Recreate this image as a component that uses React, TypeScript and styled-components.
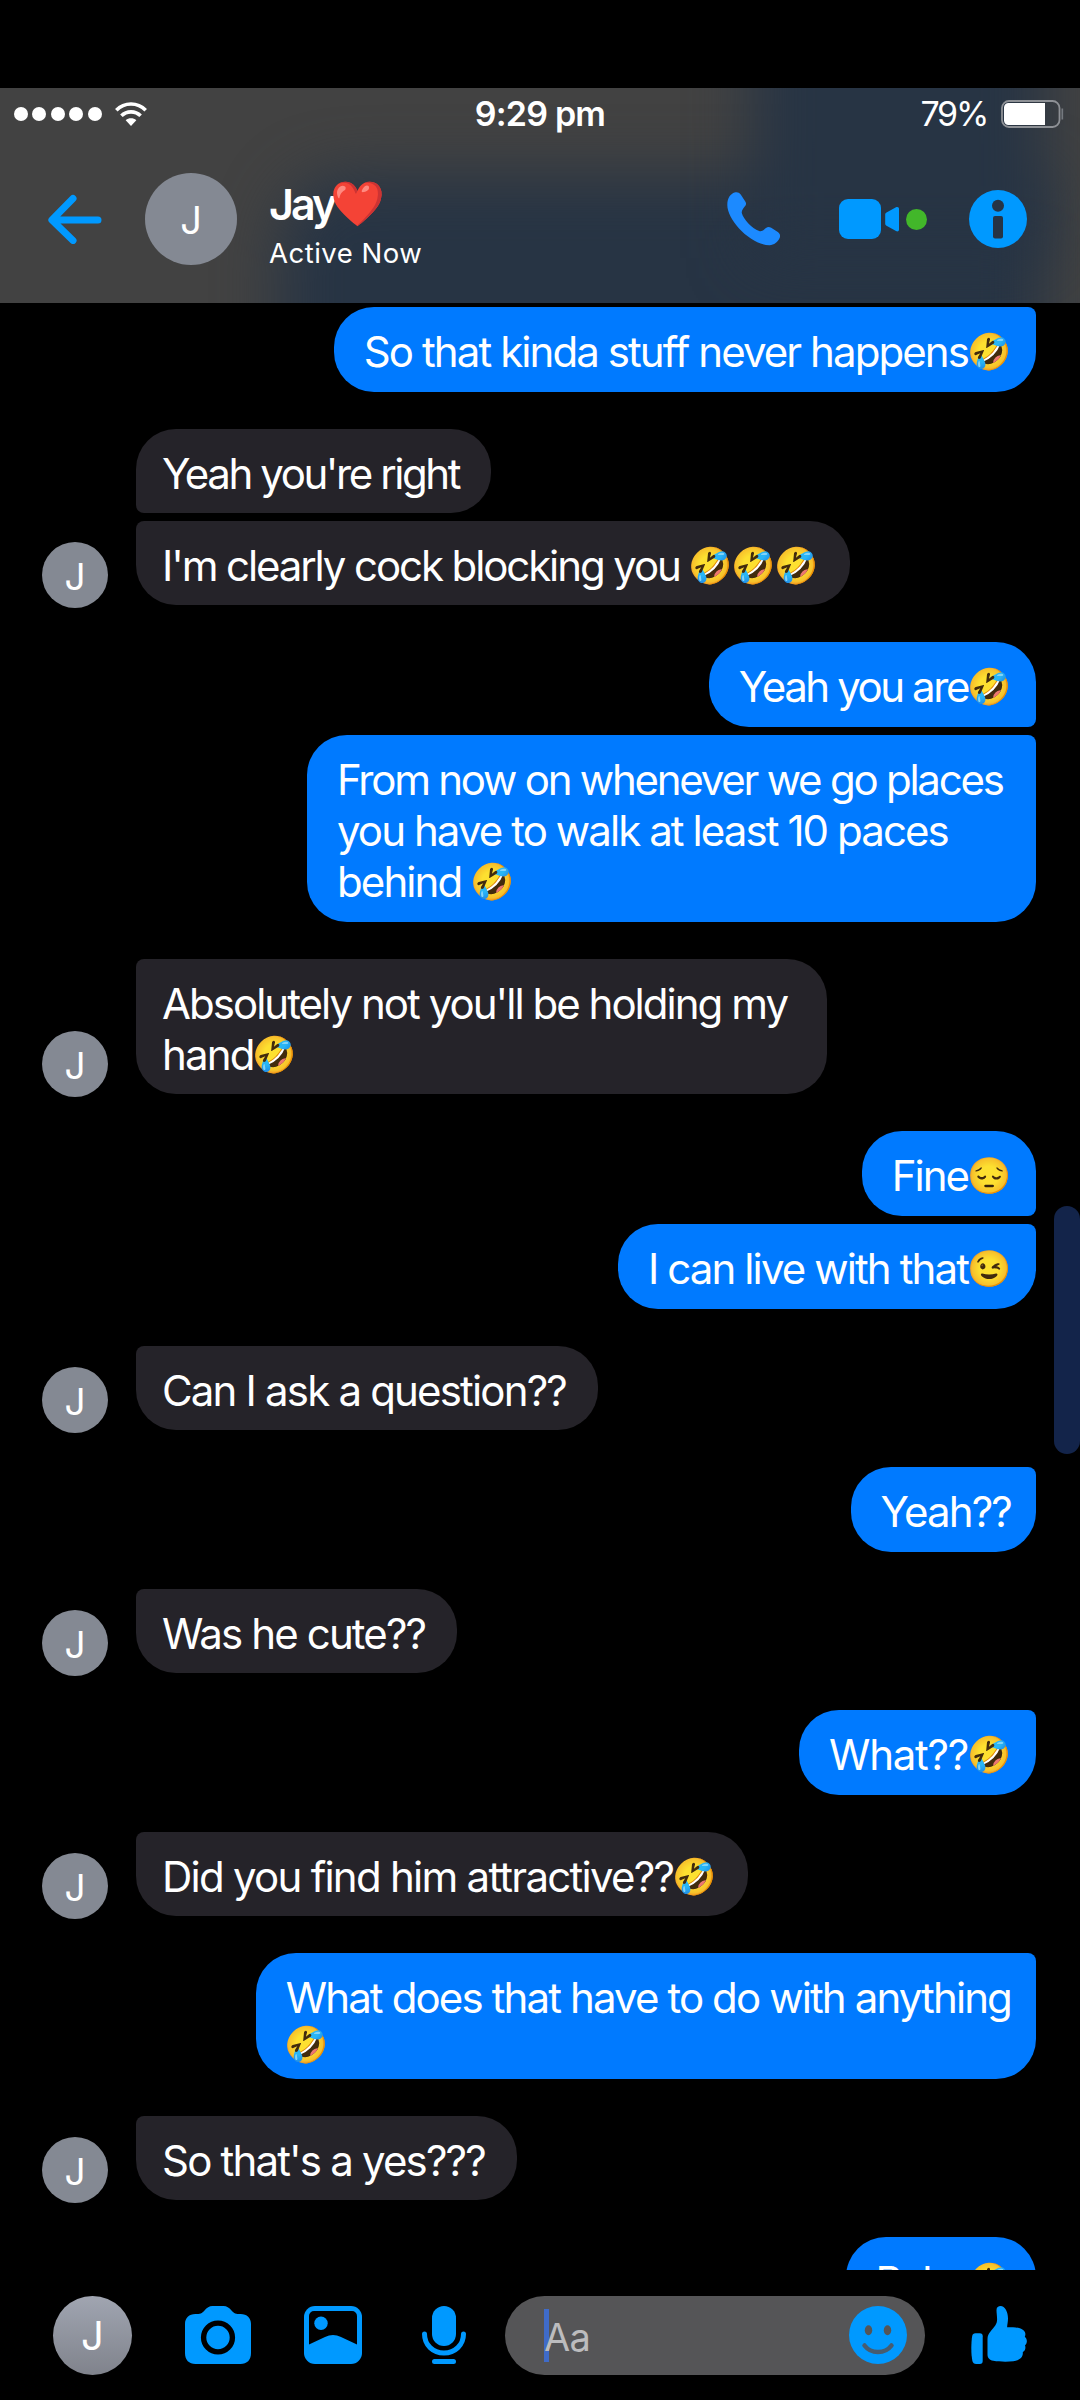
import React from "react";
import styled, { createGlobalStyle, css } from "styled-components";

const ACCENT = "#0099ff";

const GlobalStyle = createGlobalStyle`
  *, *::before, *::after { box-sizing: border-box; }
  body {
    margin: 0;
    background: #000;
    color: #fff;
    font-family: Inter, "Liberation Sans", "Noto Color Emoji", sans-serif;
  }
  svg { display: block; flex: none; }
`;

const Screen = styled.div`
  position: relative;
  display: flex;
  flex-direction: column;
  width: 1080px;
  height: 2400px;
  padding-top: 88px;
  background: #000;
  overflow: hidden;
`;

const Header = styled.header`
  position: relative;
  isolation: isolate;
  flex: none;
  height: 215px;
  background: #424242;
  overflow: hidden;

  &::before,
  &::after {
    content: "";
    position: absolute;
    z-index: -1;
    background: #273444;
    filter: blur(30px);
  }
  &::before {
    left: 280px;
    right: 36px;
    top: 88px;
    bottom: -90px;
    border-radius: 70px 0 0 0;
  }
  &::after {
    left: 752px;
    right: 36px;
    top: -90px;
    height: 260px;
  }
`;

const StatusBar = styled.div`
  display: grid;
  grid-template-columns: 1fr auto 1fr;
  align-items: center;
  height: 50px;
  padding: 0 16px 0 14px;
`;

const Signal = styled.div`
  display: flex;
  align-items: center;
  gap: 4.4px;
`;

const SignalDot = styled.span`
  width: 14px;
  height: 14px;
  border-radius: 50%;
  background: #fff;
`;

const WifiSlot = styled.span`
  margin-left: 9px;
`;

const Clock = styled.time`
  padding-left: 2px;
  font-size: 34px;
  font-weight: 600;
  line-height: 51px;
  letter-spacing: -0.8px;
`;

const Power = styled.div`
  display: flex;
  justify-content: flex-end;
  align-items: center;
  gap: 14px;
  font-size: 34px;
  line-height: 51px;
  letter-spacing: -2.3px;
`;

const NavBar = styled.div`
  display: flex;
  align-items: center;
  height: 162px;
  padding: 0 53px 0 48px;
`;

const Avatar = styled.div<{ $size: number; $font: number; $shaded?: boolean }>`
  display: flex;
  flex: none;
  align-items: center;
  justify-content: center;
  width: ${(p) => p.$size}px;
  height: ${(p) => p.$size}px;
  padding-top: 2px;
  border-radius: 50%;
  background: ${(p) =>
    p.$shaded ? "linear-gradient(#a0a5b1, #80838c)" : "#848993"};
  font-size: ${(p) => p.$font}px;
  line-height: 1;
`;

const BackSlot = styled.div`
  margin-right: 43px;
`;

const Contact = styled.div`
  display: flex;
  flex-direction: column;
  gap: 6px;
  margin-left: 32px;
  padding-top: 10px;
`;

const ContactName = styled.div`
  display: flex;
  align-items: center;
  height: 52px;
  font-size: 43px;
  font-weight: 600;
  line-height: 52px;
  letter-spacing: -3px;
`;

const Heart = styled.span`
  display: flex;
  justify-content: center;
  width: 50px;
  margin: 0 0 2px -1px;
  font-size: 44px;
  line-height: 52px;
  letter-spacing: 0;
`;

const Presence = styled.div`
  font-size: 27.5px;
  line-height: 34px;
  letter-spacing: 0.5px;
`;

const Actions = styled.div`
  display: flex;
  align-items: center;
  margin-left: auto;
`;

const CallSlot = styled.div`
  margin-right: 59px;
`;

const VideoSlot = styled.div`
  display: flex;
  align-items: center;
  gap: 7px;
  margin-right: 42px;
`;

const OnlineDot = styled.span`
  width: 21px;
  height: 21px;
  border-radius: 50%;
  background: #42b72a;
`;

const Thread = styled.main`
  display: flex;
  flex: none;
  flex-direction: column;
  gap: 37px;
  height: 1967px;
  padding: 4px 44px 0 42px;
  overflow: hidden;
`;

const Group = styled.section<{ $mine: boolean }>`
  display: flex;
  flex: none;
  gap: 28px;
  align-items: flex-end;
  justify-content: ${(p) => (p.$mine ? "flex-end" : "flex-start")};
`;

const AvatarSlot = styled.div`
  margin-bottom: -3px;
`;

const Stack = styled.div<{ $mine: boolean }>`
  display: flex;
  flex-direction: column;
  gap: 8px;
  align-items: ${(p) => (p.$mine ? "flex-end" : "flex-start")};
`;

const mineBubble = css`
  padding: 19px 25px 15px 30px;
  background: #007aff;
`;

const theirBubble = css`
  padding: 19px 32px 14px 26px;
  background: #252329;
`;

const Bubble = styled.div<{ $mine: boolean; $corners: string; $minWidth?: number }>`
  min-width: ${(p) => p.$minWidth ?? 0}px;
  border-radius: ${(p) => p.$corners};
  font-size: 42px;
  ${(p) => (p.$mine ? mineBubble : theirBubble)}
`;

const Line = styled.div<{ $tracking: number; $short?: boolean }>`
  height: ${(p) => (p.$short ? 41 : 51)}px;
  line-height: ${(p) => (p.$short ? 41 : 51)}px;
  letter-spacing: ${(p) => p.$tracking}px;
  white-space: pre;
`;

const Emoji = styled.span`
  display: inline-block;
  width: 43px;
  height: 44px;
  overflow: hidden;
  font-size: 35.5px;
  line-height: 44px;
  letter-spacing: 0;
  text-indent: -1px;
  vertical-align: -7px;
`;

const ScrollThumb = styled.div`
  position: absolute;
  right: 0;
  top: 1206px;
  width: 26px;
  height: 248px;
  border-radius: 13px;
  background: #13244a;
`;

const Composer = styled.footer`
  display: flex;
  align-items: center;
  height: 130px;
  padding: 0 53px;
`;

const Tools = styled.div`
  display: grid;
  grid-template-columns: 119px 118px 44px;
  margin: 0 39px 0 53px;
`;

const Field = styled.div`
  display: flex;
  align-items: center;
  width: 420px;
  height: 79px;
  margin-right: 46px;
  padding: 0 18px 0 39px;
  border-radius: 40px;
  background: #555557;
`;

const Caret = styled.span`
  width: 5px;
  height: 53px;
  margin-right: -5px;
  background: #3f6bc9;
`;

const Placeholder = styled.span`
  flex: 1;
  padding-top: 4px;
  color: #bcbcbe;
  font-size: 38px;
  line-height: 46px;
  letter-spacing: -0.6px;
`;

const WifiIcon = () => (
  <svg width="32" height="24" viewBox="0 0 32 24" fill="none" stroke="#fff" strokeWidth="3.6">
    <path d="M1.3 8.2C9.5 0 22.500 0 30.700 8.200" />
    <path d="M6.400 13.800c5.300-5.300 13.900-5.300 19.200 0" />
    <path d="M10.700 18.200c3-2.500 7.600-2.500 10.600 0L16 24z" fill="#fff" stroke="none" />
  </svg>
);

const BatteryIcon = () => (
  <svg width="63" height="28" viewBox="0 0 63 28">
    <rect x="1" y="1" width="57.500" height="26" rx="7" fill="none" stroke="#8e9196" strokeWidth="1.800" />
    <path d="M7.500 3H44v22H7.500A4.500 4.500 0 0 1 3 20.500v-13A4.500 4.500 0 0 1 7.500 3z" fill="#fff" />
    <path d="M61.300 8.500v11" stroke="#74797f" strokeWidth="1.700" />
  </svg>
);

const BackIcon = () => (
  <svg width="54" height="50" viewBox="0 0 54 50" fill="none" stroke={ACCENT} strokeWidth="7" strokeLinecap="round" strokeLinejoin="round">
    <path d="M50 26H4.500M25 4.500 3.900 26 25 46.500" />
  </svg>
);

const PhoneIcon = () => (
  <svg width="53" height="54" viewBox="0 0 53 54" fill="#1c8aff">
    <path d="M.3 13C.3 5.500 4 1.800 7.500.6c2.500-.9 4.500-.3 6.200 2l4.600 6.800c1.300 2 .9 3.400-.6 5.200-1.700 2-3.300 4.500-2.900 6.400 1.500 6 10.200 16 18 18.200 2.500.5 4-1.700 6.200-3.300 1.700-1.200 3.200-1.200 5.200-.2l6.600 4.300c2.300 1.600 2.800 3.700 1.800 6-1.700 3.800-5.600 7.200-10 7.200C24 53.200.3 28.500.3 13z" />
  </svg>
);

const VideoIcon = () => (
  <svg width="60" height="40" viewBox="0 0 60 40" fill={ACCENT}>
    <rect width="42" height="40" rx="9" />
    <path d="M47.500 13.500 57 8.300c1.500-.8 3-.2 3 1.600v20.600c0 1.800-1.500 2.400-3 1.600l-9.500-5.400c-1-.6-1.300-1.200-1.300-2.200v-8.800c0-1 .3-1.600 1.300-2.200z" />
  </svg>
);

const InfoIcon = () => (
  <svg width="58" height="58" viewBox="0 0 58 58">
    <circle cx="29" cy="29" r="29" fill={ACCENT} />
    <circle cx="29" cy="15.800" r="6" fill="#263445" />
    <rect x="24" y="26" width="10" height="22.500" rx="2" fill="#263445" />
  </svg>
);

const CameraIcon = () => (
  <svg width="66" height="58" viewBox="0 0 66 58">
    <path d="M10.500 8c4.500 0 6.500-.5 9-3.500 2.500-3 4.700-4.500 8-4.500h11c3.300 0 5.500 1.500 8 4.500 2.500 3 4.500 3.500 9 3.500C62 8 66 12 66 18v29c0 7-4 11-10.500 11h-45C4 58 0 54 0 47V18C0 12 4 8 10.500 8z" fill={ACCENT} />
    <circle cx="33" cy="31.500" r="14.400" fill={ACCENT} stroke="#000" strokeWidth="5.400" />
  </svg>
);

const GalleryIcon = () => (
  <svg width="58" height="58" viewBox="0 0 58 58">
    <rect width="58" height="58" rx="11" fill={ACCENT} />
    <path d="M10 5h38a5 5 0 0 1 5 5v28.500L37 31q-8-4-16 0L5 38.500V10a5 5 0 0 1 5-5z" fill="#000" />
    <circle cx="17" cy="17.300" r="6.700" fill={ACCENT} />
  </svg>
);

const MicIcon = () => (
  <svg width="44" height="58" viewBox="0 0 44 58" fill="none" stroke={ACCENT} strokeWidth="5" strokeLinecap="round">
    <rect x="10" y="0" width="24" height="40" rx="12" fill={ACCENT} stroke="none" />
    <path d="M2.500 28c0 11 8.500 19 19.500 19s19.500-8 19.500-19M12.500 55.500h19" />
  </svg>
);

const SmileIcon = () => (
  <svg width="58" height="58" viewBox="0 0 58 58">
    <circle cx="29" cy="29" r="29" fill={ACCENT} />
    <ellipse cx="19.500" cy="24.300" rx="3.700" ry="5" fill="#555557" />
    <ellipse cx="38.500" cy="24.300" rx="3.700" ry="5" fill="#555557" />
    <path d="M15.500 39.500c6.500 8.700 20.500 8.700 27 0" fill="none" stroke="#475c70" strokeWidth="4.500" strokeLinecap="round" />
  </svg>
);

const ThumbIcon = () => (
  <svg width="56" height="58" viewBox="0 0 56 58" fill={ACCENT}>
    <path d="M4.500 27.200h4.200c2.200 0 3 1 3 3v24.500c0 2.200-.8 3.300-3 3.300H5.200c-2.200 0-3.200-1-3.800-3C0 48.500 0 37 1.200 30c.4-2 1.300-2.800 3.300-2.800z" />
    <path d="M16.500 33c0-3.200 1-5.200 3-7.500 4-4.600 6.600-7.500 6.600-12 0-3.500-.6-6.700-.6-9.500C25.500 1 27.500 0 29.500 0c4.500 0 7.500 6 7.500 12.500 0 3-.7 6-.9 8.700 7 0 12.500.2 16 2.800 2.600 2 2.700 4.500 1.700 6.800 2.600 2.200 2.800 6.200.2 8.400 1 2.800.2 5.600-2.200 6.900.6 5.500-3.700 8.500-9.500 9.200-6 .6-14 .5-20-.5-4-.8-5.800-3-5.800-6.300z" />
  </svg>
);

type TextLine = { text: string; emoji?: string; tracking: number; short?: boolean };
type Message = { lines: TextLine[]; minWidth?: number };
type Conversation = { mine: boolean; continues?: boolean; messages: Message[] };

const one = (text: string, tracking: number, emoji = ""): Message => ({
  lines: [{ text, tracking, emoji }],
});

const conversation: Conversation[] = [
  { mine: true, continues: true, messages: [one("So that kinda stuff never happens", -1.92, "🤣")] },
  { mine: false, messages: [one("Yeah you're right", -2.42), one("I'm clearly cock blocking you ", -2.11, "🤣🤣🤣")] },
  {
    mine: true,
    messages: [
      one("Yeah you are", -2.42, "🤣"),
      {
        minWidth: 729,
        lines: [
          { text: "From now on whenever we go places", tracking: -2.24 },
          { text: "you have to walk at least 10 paces", tracking: -1.92 },
          { text: "behind ", tracking: -1.9, emoji: "🤣" },
        ],
      },
    ],
  },
  {
    mine: false,
    continues: true,
    messages: [
      {
        minWidth: 691,
        lines: [
          { text: "Absolutely not you'll be holding my", tracking: -1.97 },
          { text: "hand", tracking: -1.8, emoji: "🤣" },
        ],
      },
    ],
  },
  { mine: true, messages: [one("Fine", -2, "😔"), one("I can live with that", -1.9, "😉")] },
  { mine: false, continues: true, messages: [one("Can I ask a question??", -1.82)] },
  { mine: true, continues: true, messages: [one("Yeah??", -1.85)] },
  { mine: false, continues: true, messages: [one("Was he cute??", -1.88)] },
  { mine: true, continues: true, messages: [one("What??", -1.25, "🤣")] },
  { mine: false, continues: true, messages: [one("Did you find him attractive??", -1.75, "🤣")] },
  {
    mine: true,
    continues: true,
    messages: [
      {
        lines: [
          { text: "What does that have to do with anything", tracking: -1.88 },
          { text: "", tracking: 0, emoji: "🤣", short: true },
        ],
      },
    ],
  },
  { mine: false, continues: true, messages: [one("So that's a yes???", -1.82)] },
  { mine: true, messages: [one("Babe", -2.2, "🤣")] },
];

// Corners on the sender's side are tightened where bubbles join.
const cornersFor = (group: Conversation, index: number) => {
  const first = index === 0;
  const last = index === group.messages.length - 1;
  const top = first && !group.continues ? 40 : 8;
  const bottom = last ? 40 : 8;
  return group.mine ? `40px ${top}px ${bottom}px 40px` : `${top}px 40px 40px ${bottom}px`;
};

export default function App() {
  return (
    <>
      <GlobalStyle />
      <Screen>
        <Header>
          <StatusBar>
            <Signal>
              {[0, 1, 2, 3, 4].map((i) => (
                <SignalDot key={i} />
              ))}
              <WifiSlot>
                <WifiIcon />
              </WifiSlot>
            </Signal>
            <Clock>9:29 pm</Clock>
            <Power>
              <span>79%</span>
              <BatteryIcon />
            </Power>
          </StatusBar>
          <NavBar>
            <BackSlot>
              <BackIcon />
            </BackSlot>
            <Avatar $size={92} $font={38}>J</Avatar>
            <Contact>
              <ContactName>
                Jay<Heart>❤️</Heart>
              </ContactName>
              <Presence>Active Now</Presence>
            </Contact>
            <Actions>
              <CallSlot>
                <PhoneIcon />
              </CallSlot>
              <VideoSlot>
                <VideoIcon />
                <OnlineDot />
              </VideoSlot>
              <InfoIcon />
            </Actions>
          </NavBar>
        </Header>

        <Thread>
          {conversation.map((group, g) => (
            <Group key={g} $mine={group.mine}>
              {!group.mine && (
                <AvatarSlot>
                  <Avatar $size={66} $font={37}>J</Avatar>
                </AvatarSlot>
              )}
              <Stack $mine={group.mine}>
                {group.messages.map((message, m) => (
                  <Bubble
                    key={m}
                    $mine={group.mine}
                    $corners={cornersFor(group, m)}
                    $minWidth={message.minWidth}
                  >
                    {message.lines.map((line, l) => (
                      <Line key={l} $tracking={line.tracking} $short={line.short}>
                        {line.text}
                        {Array.from(line.emoji ?? "").map((char, e) => (
                          <Emoji key={e}>{char}</Emoji>
                        ))}
                      </Line>
                    ))}
                  </Bubble>
                ))}
              </Stack>
            </Group>
          ))}
        </Thread>

        <Composer>
          <Avatar $size={79} $font={40} $shaded>J</Avatar>
          <Tools>
            <CameraIcon />
            <GalleryIcon />
            <MicIcon />
          </Tools>
          <Field>
            <Caret />
            <Placeholder>Aa</Placeholder>
            <SmileIcon />
          </Field>
          <ThumbIcon />
        </Composer>
        <ScrollThumb />
      </Screen>
    </>
  );
}
